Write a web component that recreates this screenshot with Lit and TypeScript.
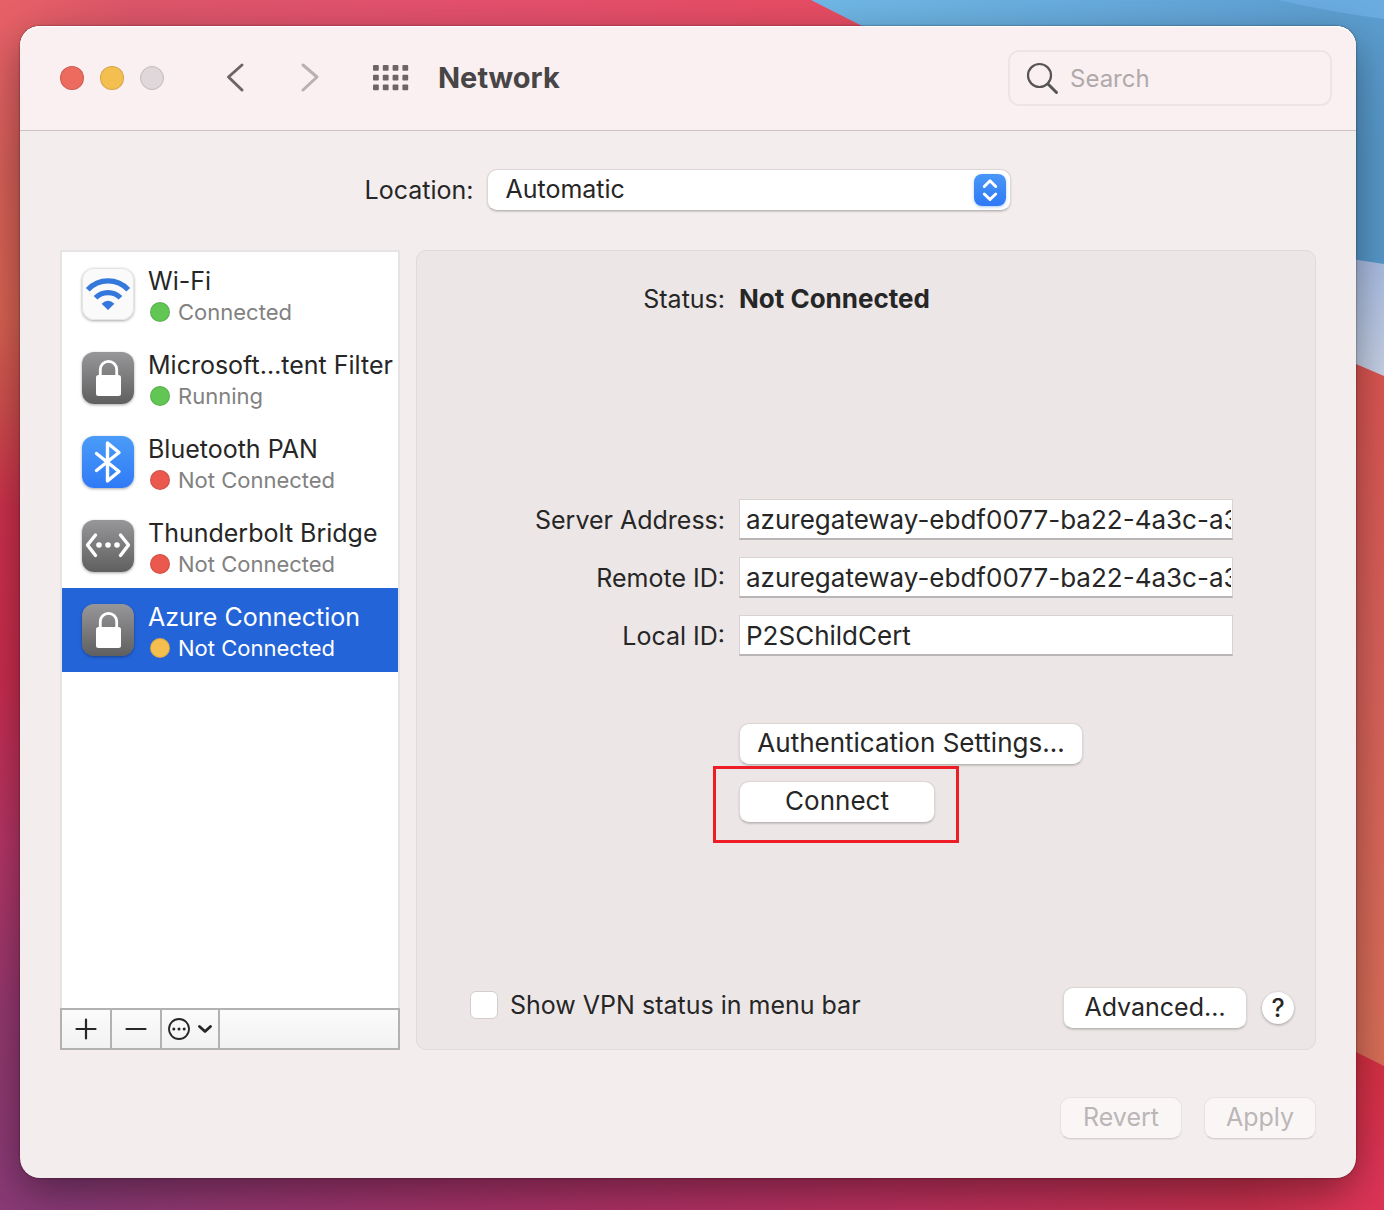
import { LitElement, html, css, svg } from "lit";
import { customElement, property, state } from "lit/decorators.js";
import { classMap } from "lit/directives/class-map.js";

interface Service {
  name: string;
  status: string;
  dot: "green" | "red" | "amber";
  icon: "wifi" | "lock" | "bluetooth" | "bridge";
}

const SERVICES: Service[] = [
  { name: "Wi-Fi", status: "Connected", dot: "green", icon: "wifi" },
  { name: "Microsoft…tent Filter", status: "Running", dot: "green", icon: "lock" },
  { name: "Bluetooth PAN", status: "Not Connected", dot: "red", icon: "bluetooth" },
  { name: "Thunderbolt Bridge", status: "Not Connected", dot: "red", icon: "bridge" },
  { name: "Azure Connection", status: "Not Connected", dot: "amber", icon: "lock" },
];

const GLYPHS = {
  wifi: svg`
    <g fill="none" stroke="#3478dc" stroke-width="5.2">
      <path d="M5.8 21.8 A27.5 27.5 0 0 1 46.2 21.8" />
      <path d="M13.5 29.8 A17.5 17.5 0 0 1 38.5 29.8" />
    </g>
    <path d="M26 42 L19.6 35.8 Q26 29.800 32.400 35.8 Z" fill="#3478dc" />`,
  lock: svg`
    <rect x="14" y="23" width="25" height="21" rx="2.5" fill="#fff" />
    <path d="M18.3 24 V17.5 a8.2 8.2 0 0 1 16.4 0 V24" fill="none" stroke="#fff" stroke-width="2.8" />`,
  bluetooth: svg`
    <path d="M14.5 17.5 L37 35.5 L25.5 45 V7 L37 16.5 L14.5 34.5" fill="none" stroke="#fff"
      stroke-width="3.4" stroke-linecap="round" stroke-linejoin="round" />`,
  bridge: svg`
    <g fill="none" stroke="#fff" stroke-width="3.4" stroke-linecap="round" stroke-linejoin="round">
      <path d="M13.5 15 L5.5 25 L13.5 35.5" />
      <path d="M38.5 15 L46.5 25 L38.5 35.5" />
    </g>
    <g fill="#fff"><circle cx="17" cy="25" r="2.8" /><circle cx="26" cy="25" r="2.8" /><circle cx="35" cy="25" r="2.8" /></g>`,
};

@customElement("service-row")
class ServiceRow extends LitElement {
  @property({ attribute: false }) service!: Service;
  @property({ type: Boolean }) selected = false;

  static styles = css`
    :host {
      display: block;
    }
    .row {
      display: flex;
      align-items: center;
      gap: 14px;
      width: 100%;
      height: 84px;
      padding: 0 0 0 20px;
      border: 0;
      background: transparent;
      color: #262626;
      font-family: inherit;
      text-align: left;
      white-space: nowrap;
      box-sizing: border-box;
    }
    .row.selected {
      background: #2464d9;
      color: #fff;
    }
    .tile {
      flex: none;
      width: 52px;
      height: 52px;
      border-radius: 12px;
      box-shadow: 0 1px 3px rgba(0, 0, 0, 0.35);
    }
    .tile svg {
      display: block;
    }
    .wifi {
      background: #fafafa;
      box-shadow: inset 0 0 0 1px #e4e4e4, 0 1px 3px rgba(0, 0, 0, 0.35);
    }
    .lock,
    .bridge {
      background: linear-gradient(#979799, #5f5f60);
    }
    .bluetooth {
      background: linear-gradient(#4b9cf8, #2f7af6);
    }
    .text {
      display: block;
      padding-top: 4px;
    }
    .name {
      display: block;
      font-size: 25px;
      line-height: 32px;
    }
    .status {
      display: flex;
      align-items: center;
      gap: 8px;
      padding-left: 2px;
      font-size: 22px;
      line-height: 30px;
      color: #818181;
    }
    .selected .status {
      color: #fff;
    }
    .dot {
      width: 20px;
      height: 20px;
      border-radius: 50%;
      box-sizing: border-box;
      border: 1px solid rgba(0, 0, 0, 0.12);
    }
    .green {
      background: #62c655;
    }
    .red {
      background: #eb584d;
    }
    .amber {
      background: #f5bf4f;
    }
  `;

  render() {
    const s = this.service;
    return html`<button class=${classMap({ row: true, selected: this.selected })} type="button">
      <span class="tile ${s.icon}">
        <svg width="52" height="52" viewBox="0 0 52 52" aria-hidden="true">${GLYPHS[s.icon]}</svg>
      </span>
      <span class="text">
        <span class="name">${s.name}</span>
        <span class="status"><span class="dot ${s.dot}"></span>${s.status}</span>
      </span>
    </button>`;
  }
}

@customElement("app-root")
class AppRoot extends LitElement {
  @state() private current = 4;

  static styles = css`
    :host {
      display: flex;
      position: relative;
      min-height: 100vh;
      padding: 26px 28px 32px 20px;
      box-sizing: border-box;
      overflow: hidden;
      font-family: Inter, "Liberation Sans", sans-serif;
      font-size: 25px;
      line-height: 32px;
      color: #262626;
    }
    button,
    input,
    select {
      font: inherit;
      color: inherit;
      box-sizing: border-box;
      margin: 0;
    }
    svg {
      display: block;
    }
    .wallpaper {
      position: absolute;
      inset: 0;
      width: 100%;
      height: 100%;
    }
    .window {
      position: relative;
      flex: 1;
      display: flex;
      flex-direction: column;
      min-width: 0;
      border-radius: 20px;
      background: #f3eded;
      box-shadow: 0 0 2px rgba(0, 0, 0, 0.6), 0 14px 40px rgba(0, 0, 0, 0.4);
    }
    .titlebar {
      display: flex;
      align-items: center;
      height: 105px;
      padding: 0 24px 0 40px;
      box-sizing: border-box;
      border-bottom: 1px solid #c9c3c4;
      border-radius: 20px 20px 0 0;
      background: #faf0f1;
      box-shadow: inset 0 1px #fff;
    }
    .lights {
      display: flex;
      gap: 16px;
    }
    .light {
      width: 24px;
      height: 24px;
      padding: 0;
      border-radius: 50%;
      border: 1px solid rgba(0, 0, 0, 0.14);
    }
    .close {
      background: #ed6a5e;
    }
    .minimise {
      background: #f5bf4f;
    }
    .zoom {
      background: #dfd7d9;
      border-color: #c2babb;
    }
    .nav {
      display: flex;
      gap: 44px;
      margin-left: 56px;
    }
    .plain {
      padding: 0;
      border: 0;
      background: none;
    }
    .all {
      margin-left: 48px;
    }
    h1 {
      flex: 1;
      margin: 0 0 0 28px;
      font-size: 29px;
      font-weight: 700;
      line-height: 36px;
      color: #474546;
    }
    .search {
      display: flex;
      align-items: center;
      gap: 11px;
      width: 324px;
      height: 56px;
      padding: 0 16px;
      box-sizing: border-box;
      border: 2px solid #eee4e5;
      border-radius: 11px;
      font-size: 24px;
    }
    .search svg {
      flex: none;
    }
    .search input {
      flex: 1;
      min-width: 0;
      padding: 2px 0 0;
      border: 0;
      outline: 0;
      background: transparent;
    }
    .search input::placeholder {
      color: #b0a9aa;
      opacity: 1;
    }
    .content {
      flex: 1;
      display: flex;
      flex-direction: column;
      padding: 38px 40px 39px;
    }
    .location {
      display: flex;
      justify-content: center;
      align-items: center;
      gap: 14px;
      height: 42px;
    }
    .popup {
      position: relative;
      width: 524px;
    }
    .popup select {
      appearance: none;
      display: block;
      width: 100%;
      height: 42px;
      padding: 0 48px 2px 17px;
    }
    .push,
    .popup select {
      border: 1px solid #dcd6d6;
      border-bottom-color: #bdb8b8;
      border-radius: 10px;
      background: #fff;
      box-shadow: 0 1px 2px rgba(0, 0, 0, 0.16);
    }
    .stepper {
      position: absolute;
      top: 5px;
      right: 5px;
      width: 32px;
      height: 32px;
      border-radius: 8px;
      background: linear-gradient(#4a97f8, #2e79f5);
      box-shadow: 0 1px 3px rgba(46, 121, 245, 0.4);
      pointer-events: none;
    }
    .columns {
      flex: 1;
      display: flex;
      gap: 16px;
      margin-top: 39px;
    }
    .sidebar {
      flex: none;
      display: flex;
      flex-direction: column;
      width: 340px;
    }
    .list {
      flex: 1;
      margin: 0;
      padding: 0;
      list-style: none;
      border: 2px solid #e5e3e3;
      border-bottom: 0;
      background: #fff;
    }
    .tools {
      display: flex;
      height: 42px;
      box-sizing: border-box;
      border: 2px solid #b2b2b2;
      background: linear-gradient(#fbfbfb, #f2f2f2);
    }
    .tool {
      display: flex;
      align-items: center;
      justify-content: center;
      gap: 8px;
      width: 50px;
      padding: 0;
      border: 0;
      border-right: 2px solid #b2b2b2;
      background: none;
    }
    .tool.wide {
      width: 58px;
    }
    .panel {
      flex: 1;
      display: flex;
      flex-direction: column;
      min-width: 0;
      border: 1px solid #e0dadb;
      border-radius: 10px;
      background: #ece6e6;
    }
    .form {
      display: grid;
      grid-template-columns: minmax(0, 308fr) minmax(0, 494fr);
      column-gap: 14px;
      row-gap: 17px;
      padding: 32px 82px 0 0;
      align-items: center;
    }
    .form label,
    .label {
      text-align: right;
      white-space: nowrap;
    }
    .value,
    .field,
    .actions {
      font-size: 26px;
    }
    .value {
      font-weight: 700;
    }
    .gap {
      grid-column: 1 / -1;
      height: 150px;
    }
    .field {
      width: 100%;
      height: 41px;
      padding: 0 1px 0 6px;
      border: 1px solid #d8d3d3;
      border-bottom: 2px solid #b9b4b5;
      border-radius: 0;
      background: #fff;
    }
    .actions {
      grid-column: 2;
      display: flex;
      flex-direction: column;
      align-items: flex-start;
      gap: 16px;
      padding-top: 50px;
    }
    .push {
      height: 42px;
      padding: 0 0 2px;
      white-space: nowrap;
    }
    .auth {
      width: 344px;
    }
    .connect {
      position: relative;
    }
    .connect .push {
      display: block;
      width: 196px;
    }
    .marker {
      position: absolute;
      inset: -15px -24px -20px -26px;
      border: 3px solid #ee1c25;
      pointer-events: none;
    }
    .bottom {
      display: flex;
      align-items: center;
      margin-top: auto;
      padding: 0 21px 20px 53px;
    }
    .check {
      flex: 1;
      display: flex;
      align-items: center;
      gap: 12px;
      padding-bottom: 6px;
    }
    .check input {
      appearance: none;
      width: 28px;
      height: 28px;
      border: 1px solid #d3cdcd;
      border-radius: 6px;
      background: #fff;
    }
    .advanced {
      width: 184px;
    }
    .help {
      width: 32px;
      height: 32px;
      margin-left: 15px;
      padding: 0;
      border: 0;
      border-radius: 50%;
      background: #fff;
      box-shadow: 0 1px 3px rgba(0, 0, 0, 0.32);
      font-weight: 500;
    }
    .footer {
      display: flex;
      justify-content: flex-end;
      gap: 22px;
      padding-top: 47px;
    }
    .push:disabled {
      background: #faf6f6;
      border-color: #e8e2e2;
      border-bottom-color: #d6d0d0;
      box-shadow: 0 1px 1px rgba(0, 0, 0, 0.06);
      color: #bab6b7;
    }
    .revert {
      width: 122px;
    }
    .apply {
      width: 112px;
    }
  `;

  private wallpaper() {
    return html`<svg class="wallpaper" viewBox="0 0 1384 1210" preserveAspectRatio="none" aria-hidden="true">
      <defs>
        <linearGradient id="left" x1="0" y1="0" x2="0" y2="1">
          <stop offset="0" stop-color="#e66067" />
          <stop offset="0.06" stop-color="#e26064" />
          <stop offset="0.14" stop-color="#d65f58" />
          <stop offset="0.26" stop-color="#d86252" />
          <stop offset="0.33" stop-color="#d0504e" />
          <stop offset="0.42" stop-color="#cc304b" />
          <stop offset="0.56" stop-color="#c92c4e" />
          <stop offset="0.7" stop-color="#b43566" />
          <stop offset="0.84" stop-color="#93386f" />
          <stop offset="1" stop-color="#893a76" />
        </linearGradient>
        <linearGradient id="top" gradientUnits="userSpaceOnUse" x1="0" y1="0" x2="880" y2="0">
          <stop offset="0" stop-color="#e66067" />
          <stop offset="0.02" stop-color="#e66067" />
          <stop offset="0.15" stop-color="#dc5669" />
          <stop offset="0.5" stop-color="#e3506d" />
          <stop offset="1" stop-color="#e64c62" />
        </linearGradient>
        <linearGradient id="bottom" x1="0" y1="0" x2="1" y2="0">
          <stop offset="0" stop-color="#893a76" />
          <stop offset="0.05" stop-color="#893a76" />
          <stop offset="0.35" stop-color="#a63268" />
          <stop offset="0.65" stop-color="#bc305e" />
          <stop offset="0.9" stop-color="#c8304e" />
          <stop offset="0.97" stop-color="#dc3456" />
          <stop offset="1" stop-color="#dc3456" />
        </linearGradient>
        <linearGradient id="blue" x1="0" y1="0" x2="1" y2="0.5">
          <stop offset="0" stop-color="#70b8e6" />
          <stop offset="0.6" stop-color="#62a3d6" />
          <stop offset="1" stop-color="#5597c8" />
        </linearGradient>
        <linearGradient id="pale" x1="0" y1="0" x2="0" y2="1">
          <stop offset="0" stop-color="#a5b9e0" />
          <stop offset="1" stop-color="#cdd5e6" />
        </linearGradient>
        <linearGradient id="coral" x1="0" y1="0" x2="0" y2="1">
          <stop offset="0" stop-color="#d95350" />
          <stop offset="0.4" stop-color="#d8605a" />
          <stop offset="1" stop-color="#d96f58" />
        </linearGradient>
        <linearGradient id="crimson" gradientUnits="userSpaceOnUse" x1="0" y1="1030" x2="0" y2="1178">
          <stop offset="0" stop-color="#d22e3e" />
          <stop offset="1" stop-color="#dc3456" />
        </linearGradient>
      </defs>
      <rect width="1384" height="1210" fill="url(#bottom)" />
      <rect width="60" height="1210" fill="url(#left)" />
      <path d="M0 0 H900 V26 H0 Z" fill="url(#top)" />
      <path d="M811 0 H1384 V280 H1200 L870 30 Z" fill="url(#blue)" />
      <path d="M1278 0 Q1330 12 1384 19 V0 Z" fill="#6aabe0" />
      <path d="M1300 251 L1384 264 V400 H1300 Z" fill="url(#pale)" />
      <path d="M1300 340 L1384 376 V1080 H1300 Z" fill="url(#coral)" />
      <path d="M1342 1045 L1384 1066 V1210 H1342 Z" fill="url(#crimson)" />
    </svg>`;
  }

  render() {
    return html`
      ${this.wallpaper()}
      <main class="window">
        <header class="titlebar">
          <div class="lights">
            <button class="light close" type="button" aria-label="Close"></button>
            <button class="light minimise" type="button" aria-label="Minimise"></button>
            <button class="light zoom" type="button" aria-label="Zoom" disabled></button>
          </div>
          <nav class="nav">
            <button class="plain" type="button" aria-label="Back">
              <svg width="30" height="32" viewBox="0 0 30 32" fill="none" stroke="#6e6465" stroke-width="3" stroke-linecap="round" stroke-linejoin="round"><path d="M22 3 L8.500 15 L22 28" /></svg>
            </button>
            <button class="plain" type="button" aria-label="Forward" disabled>
              <svg width="30" height="32" viewBox="0 0 30 32" fill="none" stroke="#bbb0b1" stroke-width="3" stroke-linecap="round" stroke-linejoin="round"><path d="M9 3 L23 15 L9 28" /></svg>
            </button>
          </nav>
          <button class="plain all" type="button" aria-label="Show all">
            <svg width="38" height="26" viewBox="0 0 38 26" fill="#6e6465">
              ${[0, 1, 2].map((r) =>
                [0, 1, 2, 3].map((c) => svg`<rect x=${1 + c * 9.8} y=${r * 9.7} width="5.8" height="5.8" rx="1" />`)
              )}
            </svg>
          </button>
          <h1>Network</h1>
          <label class="search">
            <svg width="33" height="33" viewBox="0 0 33 33" fill="none" stroke="#575454">
              <circle cx="13.500" cy="13.500" r="11.500" stroke-width="2.200" />
              <path d="M22 22 L30.500 30.500" stroke-width="3" stroke-linecap="round" />
            </svg>
            <input type="text" placeholder="Search" aria-label="Search" />
          </label>
        </header>

        <div class="content">
          <div class="location">
            <label for="location">Location:</label>
            <div class="popup">
              <select id="location">
                <option>Automatic</option>
              </select>
              <span class="stepper">
                <svg width="32" height="32" viewBox="0 0 32 32" fill="none" stroke="#fff" stroke-width="3" stroke-linecap="round" stroke-linejoin="round">
                  <path d="M10.300 12.500 L16 6.800 L21.700 12.500" />
                  <path d="M10.300 20 L16 25.500 L21.700 20" />
                </svg>
              </span>
            </div>
          </div>

          <div class="columns">
            <section class="sidebar">
              <ul class="list">
                ${SERVICES.map(
                  (s, i) => html`<li>
                    <service-row .service=${s} ?selected=${i === this.current} @click=${() => (this.current = i)}></service-row>
                  </li>`
                )}
              </ul>
              <div class="tools">
                <button class="tool" type="button" aria-label="Add">
                  <svg width="22" height="22" viewBox="0 0 22 22" stroke="#262626" stroke-width="2.200" stroke-linecap="round"><path d="M11 1.500 V20.500 M1.500 11 H20.500" /></svg>
                </button>
                <button class="tool" type="button" aria-label="Remove">
                  <svg width="22" height="22" viewBox="0 0 22 22" stroke="#262626" stroke-width="2.200" stroke-linecap="round"><path d="M1.500 11 H20.500" /></svg>
                </button>
                <button class="tool wide" type="button" aria-label="More actions">
                  <svg width="22" height="22" viewBox="0 0 22 22" fill="#262626">
                    <circle cx="11" cy="11" r="10" fill="none" stroke="#262626" stroke-width="1.800" />
                    <circle cx="5.800" cy="11" r="1.500" /><circle cx="11" cy="11" r="1.500" /><circle cx="16.200" cy="11" r="1.500" />
                  </svg>
                  <svg width="14" height="10" viewBox="0 0 14 10" fill="none" stroke="#262626" stroke-width="2.800" stroke-linecap="round" stroke-linejoin="round"><path d="M1.500 2.500 L7 7.500 L12.500 2.500" /></svg>
                </button>
              </div>
            </section>

            <section class="panel">
              <div class="form">
                <span class="label">Status:</span>
                <span class="value">Not Connected</span>
                <span class="gap"></span>
                <label for="server">Server Address:</label>
                <input class="field" id="server" type="text" value="azuregateway-ebdf0077-ba22-4a3c-a3" />
                <label for="remote">Remote ID:</label>
                <input class="field" id="remote" type="text" value="azuregateway-ebdf0077-ba22-4a3c-a3" />
                <label for="local">Local ID:</label>
                <input class="field" id="local" type="text" value="P2SChildCert" />
                <div class="actions">
                  <button class="push auth" type="button">Authentication Settings…</button>
                  <div class="connect">
                    <button class="push" type="button">Connect</button>
                    <span class="marker"></span>
                  </div>
                </div>
              </div>
              <div class="bottom">
                <label class="check"><input type="checkbox" />Show VPN status in menu bar</label>
                <button class="push advanced" type="button">Advanced…</button>
                <button class="help" type="button" aria-label="Help">?</button>
              </div>
            </section>
          </div>

          <div class="footer">
            <button class="push revert" type="button" disabled>Revert</button>
            <button class="push apply" type="button" disabled>Apply</button>
          </div>
        </div>
      </main>
    `;
  }
}
